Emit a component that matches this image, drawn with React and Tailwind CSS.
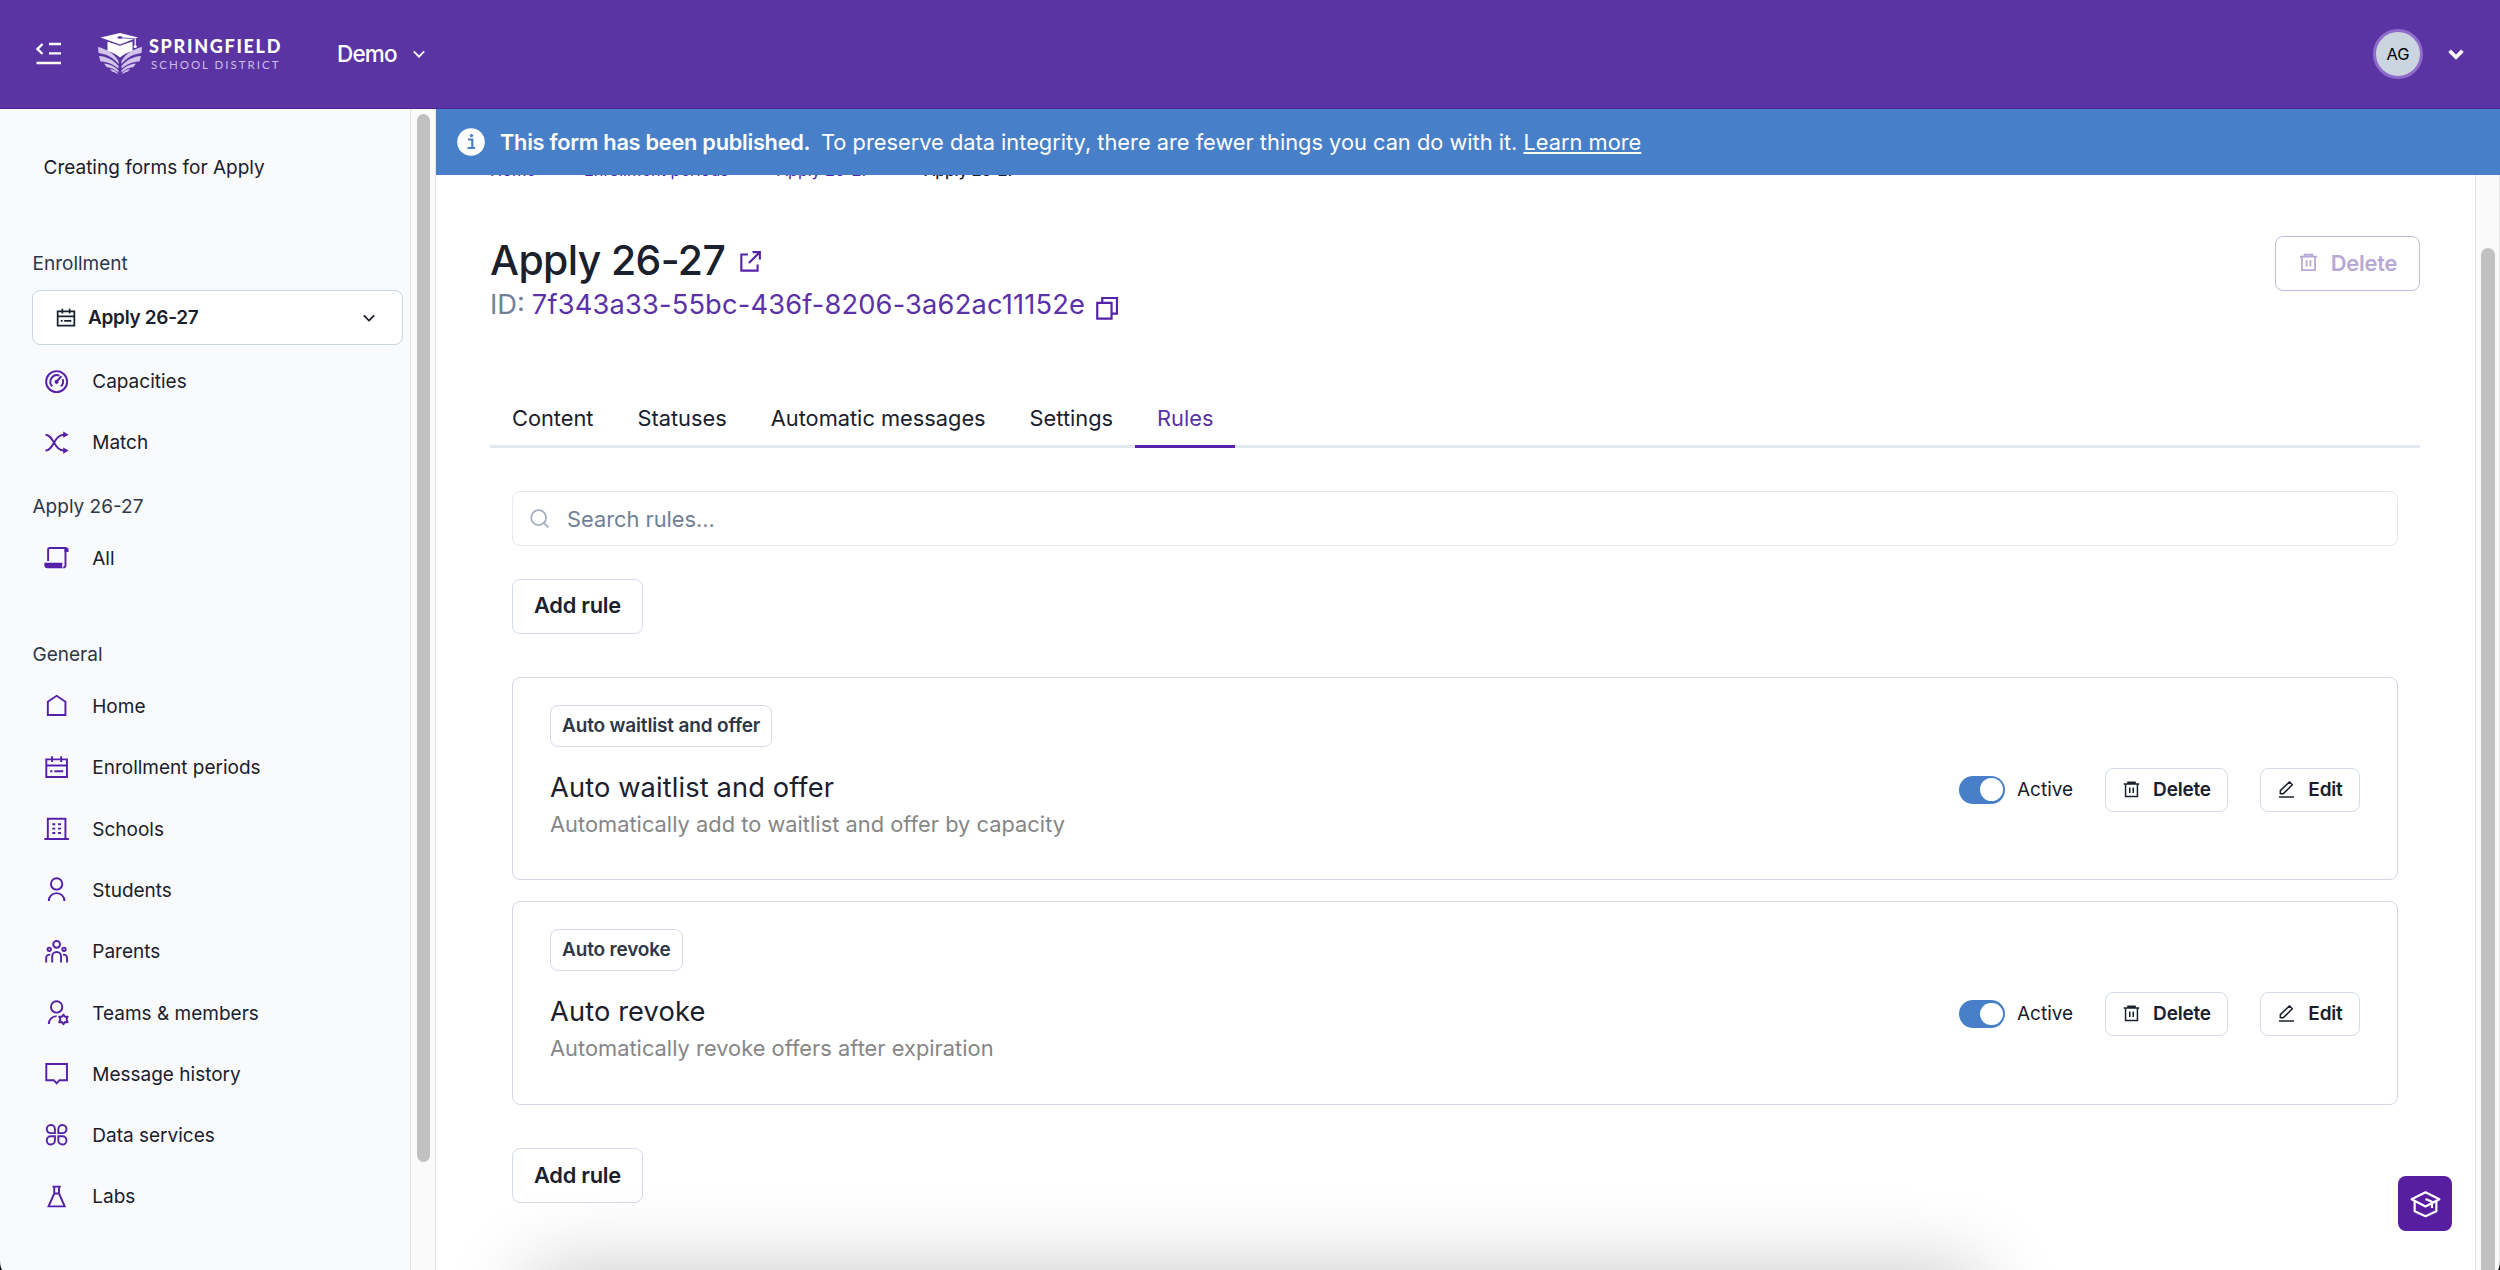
import clsx from 'clsx';

function Icon({ className, strokeWidth = 1.7, children }) {
    return (
        <svg
            viewBox="0 0 24 24"
            fill="none"
            stroke="currentColor"
            strokeWidth={strokeWidth}
            className={clsx('shrink-0', className)}
        >
            {children}
        </svg>
    );
}

const paths = {
    gauge: (
        <>
            <circle cx="12" cy="12" r="9.25" />
            <path d="M8.2 16.2A5.8 5.8 0 0 1 14.4 6.7M17.3 9.8a5.8 5.8 0 0 1-1.5 6.4" />
            <path d="m12.2 11.8 4-4.6" strokeWidth="1.8" />
            <circle cx="12" cy="12.2" r="1.8" fill="currentColor" stroke="none" />
        </>
    ),
    shuffle: (
        <>
            <path d="M2.2 5C9.5 5 9.5 19 18.5 19M2.2 19C9.5 19 9.5 5 18.5 5" />
            <path d="M17.8 2.2 22.6 5l-4.8 2.8zM17.8 16.2l4.8 2.8-4.8 2.8z" fill="currentColor" stroke="none" />
        </>
    ),
    scroll: (
        <>
            <path d="M4.5 15V4.75a1.3 1.3 0 0 1 1.3-1.3H19.8v15.2a1.9 1.9 0 0 1-1.9 1.9" />
            <path d="M19 3h1.8a1.7 1.7 0 0 1 1.7 1.7v2.4H19z" fill="currentColor" stroke="none" />
            <path d="M1.2 16.5h15.8v2.3a1.7 1.7 0 0 0 1.5 2.5H4a2.8 2.8 0 0 1-2.8-2.8z" fill="currentColor" stroke="none" />
        </>
    ),
    home: <path d="M4.25 8.6 12 3.35l7.75 5.25v11.65H4.25z" />,
    calendar: (
        <path d="M2.9 4.75h18.2v15.5H2.9zM2.9 10.2h18.2M8 2v5M16 2v5M6.3 15.2h2M10 15.2h7.8" />
    ),
    building: (
        <>
            <path d="M4.25 21V3.25h15.5V21M1.2 21.2h21.6" />
            <path d="M8.2 8.2h2.6M13.2 8.2h2.6M8.2 12h2.6M13.2 12h2.6M8.2 15.8h2.6M13.2 15.8h2.6" />
        </>
    ),
    user: (
        <>
            <circle cx="12" cy="7" r="5" />
            <path d="M5.1 22a6.9 6.9 0 0 1 13.8 0" />
        </>
    ),
    parents: (
        <>
            <circle cx="12" cy="5.6" r="3" />
            <circle cx="5.5" cy="10" r="1.5" />
            <circle cx="18.5" cy="10" r="1.5" />
            <path d="M8.1 21.5v-5.3a3.9 3.9 0 0 1 7.8 0v5.3M2.8 21.5v-4.2a2.7 2.7 0 0 1 3.6-2.5M21.2 21.5v-4.2a2.7 2.7 0 0 0-3.6-2.5" />
        </>
    ),
    team: (
        <>
            <circle cx="12" cy="7" r="5" />
            <path d="M5.1 22a6.9 6.9 0 0 1 6.9-6.9" />
            <path
                d="m18 13.8 1.3 1.9 2.4-.1-1 2.4 1 2.4-2.4-.1-1.3 1.9-1.3-1.9-2.4.1 1-2.4-1-2.4 2.4.1z"
                strokeLinejoin="round"
            />
        </>
    ),
    message: <path d="M2.9 3.6h18.2v14.2h-6.6L12 20.6l-2.5-2.8H2.9z" />,
    data: (
        <path d="M10.5 10.7V7A3.6 3.6 0 1 0 6.9 10.7zM13.5 10.7V7a3.6 3.6 0 1 1 3.6 3.7zM10.5 13.5v3.7a3.6 3.6 0 1 1-3.6-3.7zM13.5 13.5v3.7a3.6 3.6 0 1 0 3.6-3.7z" />
    ),
    flask: <path d="M8.3 3.2h7.4M9.9 3.2v6L4.9 20.6h14.2L14.1 9.2v-6M9.9 9.3h4.2" />,
    trash: (
        <path d="M2.2 5.2h19.6M7.5 4.5V3h9v1.5M4.5 5.2v15.6h15V5.2M9.8 9.5v7M14.2 9.5v7" />
    ),
    edit: (
        <path d="M2.5 21.6h19M4.2 17.4v-4L15.8 2.4l3.6 3.7-11.5 11.3z" strokeLinejoin="round" />
    ),
    external: <path d="M9.5 5.2H3.2v15.6h15.6v-6M14 3h7v7M20.8 3.2 10.5 13.5" />,
    copy: <path d="M3 7.2h13.2v14.6H3zM7.6 7V2.8h13.6v14.4H16.4" />,
    search: (
        <>
            <circle cx="11" cy="11" r="8.5" />
            <path d="m17.2 17.2 5 5" />
        </>
    ),
    chevron: <path d="m5 8.5 7 7 7-7" />,
    cap: (
        <>
            <path d="M1.3 8.7 12 3.3l10.7 5.4L12 14.3z" strokeLinejoin="round" />
            <path d="M3.6 10v8L12 21.8l8.400-3.800v-8M12 8.500l5 2.200v4.800" strokeLinejoin="round" />
        </>
    ),
};

const generalItems = [
    { label: 'Home', icon: 'home' },
    { label: 'Enrollment periods', icon: 'calendar' },
    { label: 'Schools', icon: 'building' },
    { label: 'Students', icon: 'user' },
    { label: 'Parents', icon: 'parents' },
    { label: 'Teams & members', icon: 'team' },
    { label: 'Message history', icon: 'message' },
    { label: 'Data services', icon: 'data' },
    { label: 'Labs', icon: 'flask' },
];

const rules = [
    { name: 'Auto waitlist and offer', description: 'Automatically add to waitlist and offer by capacity' },
    { name: 'Auto revoke', description: 'Automatically revoke offers after expiration' },
];

const tabs = ['Content', 'Statuses', 'Automatic messages', 'Settings', 'Rules'];

function Logo() {
    return (
        <div className="flex items-center gap-[7px]">
            <svg viewBox="0 0 44 42" className="h-[42px] w-[44px]">
                <g fill="#d3c4ec">
                    <path d="M0 14c8 2 16 6 20.500 14v3C15 24 8 21 .5 20zM44 14c-8 2-16 6-20.500 14v3C29 24 36 21 43.500 20z" />
                    <path d="M1 23c7 .5 14 3.500 19.500 10v2.500C15 31 8 28.500 2.500 28.500zM43 23c-7 .5-14 3.500-19.500 10v2.500C29 31 36 28.500 41.500 28.500z" />
                    <path d="M6 30.500c6 .5 11 3 14.500 7v2C17 36.500 13 34.500 8.500 34zM38 30.500c-6 .5-11 3-14.500 7v2C27 36.500 31 34.500 35.500 34z" />
                    <path d="M12 36c4 .5 7 2.500 8.500 5.500-2-1.500-4-2.500-6.500-3zM32 36c-4 .5-7 2.500-8.500 5.500 2-1.500 4-2.500 6.500-3z" />
                </g>
                <path d="M9.500 8.500v9.500c5 1.500 9.500 3.500 12.500 6.500 3-3 7.500-5 12.500-6.500V8.500L22 12z" fill="#fff" />
                <path d="M2.500 4.500 22 0l18 4.500L22 11.500z" fill="#fff" />
                <path d="M2.500 5.500 22 12.300l14-5.300" fill="none" stroke="#5b34a3" />
                <path d="M21 4.500 37.500 6v7" fill="none" stroke="#5b34a3" strokeWidth=".8" />
                <path d="M37.200 5.500v7" stroke="#fff" strokeWidth="1.2" />
                <circle cx="37.200" cy="13.500" r="1.6" fill="#fff" />
                <ellipse cx="22" cy="4.500" rx="2.6" ry="1.2" fill="#5b34a3" />
            </svg>
            <div className="-mt-[1px] flex w-[136px] flex-col font-['Lato',sans-serif] whitespace-nowrap">
                <span className="text-[18px] leading-[19px] font-black tracking-[1.7px] text-white">SPRINGFIELD</span>
                <span className="mt-[2px] pl-[2px] text-[11.5px] leading-[13px] tracking-[2px] text-[#cdbdea]">SCHOOL DISTRICT</span>
            </div>
        </div>
    );
}

function Header() {
    return (
        <header className="flex h-[109px] shrink-0 items-center border-b border-[#4c2496] bg-[#5b34a3] text-white">
            <svg viewBox="0 0 26 24" className="ml-[36px] h-[24px] w-[26px]" fill="none" stroke="currentColor" strokeWidth="2.4">
                <path d="M6.5 2 1.5 7l5 5M13 2h12M13 11.4h12M.5 21h24.5" />
            </svg>
            <div className="ml-[36px]">
                <Logo />
            </div>
            <span className="ml-[52px] w-[61px] text-[22.5px] font-medium tracking-[-0.8px]">Demo</span>
            <Icon className="ml-[12px] h-[18px] w-[18px]" strokeWidth={2.4}>{paths.chevron}</Icon>
            <div className="mr-[22px] ml-auto flex h-[50px] w-[50px] items-center justify-center rounded-full border-[3.5px] border-[#8f6bcb] bg-[#cbd5e0] text-[16.5px] text-black">
                AG
            </div>
            <Icon className="mr-[33px] h-[22px] w-[22px]" strokeWidth={4}>{paths.chevron}</Icon>
        </header>
    );
}

function NavItem({ icon, label }) {
    return (
        <a className="flex h-[61.3px] items-center pl-[43px] text-[19px] text-[#1a202c]">
            <Icon className="mb-[1px] h-[27.25px] w-[27.25px] text-[#5521a8]">{paths[icon]}</Icon>
            <span className="mt-[1px] ml-[22px]">{label}</span>
        </a>
    );
}

function Sidebar() {
    return (
        <aside className="flex w-[436px] shrink-0">
            <div className="flex w-[410px] flex-col bg-[#f9fafc] text-[#1a202c]">
                <p className="mt-[44px] pl-[43.5px] text-[19px] leading-[30px]">Creating forms for Apply</p>
                <p className="mt-[66px] pl-[32.5px] text-[19px] leading-[30px] text-[#2d3748]">Enrollment</p>
                <div className="mt-[11px] ml-[32px] flex h-[55px] w-[371px] shrink-0 items-center rounded-[8px] border border-[#cbd5e0] bg-white pr-[24px] pl-[22px] text-[19px] font-semibold tracking-[-0.3px]">
                    <Icon className="h-[22px] w-[22px]" strokeWidth={1.9}>{paths.calendar}</Icon>
                    <span className="mt-[1px] ml-[11px]">Apply 26-27</span>
                    <Icon className="ml-auto h-[18px] w-[18px]" strokeWidth={2.3}>{paths.chevron}</Icon>
                </div>
                <nav className="mt-[6px]">
                    <NavItem icon="gauge" label="Capacities" />
                    <NavItem icon="shuffle" label="Match" />
                </nav>
                <p className="mt-[18px] pl-[32.5px] text-[19px] leading-[30px] text-[#2d3748]">Apply 26-27</p>
                <nav className="mt-[6px]">
                    <NavItem icon="scroll" label="All" />
                </nav>
                <p className="mt-[51px] pl-[32.5px] text-[19px] leading-[30px] text-[#2d3748]">General</p>
                <nav className="mt-[6px]">
                    {generalItems.map((item) => (
                        <NavItem key={item.label} icon={item.icon} label={item.label} />
                    ))}
                </nav>
            </div>
            {/* Scrollbar */}
            <div className="w-[26px] border-x border-[#e4e4e4] bg-[#fafafa] pt-[5px] pl-[6px]">
                <div className="h-[1048px] w-[13px] rounded-full bg-[#c1c1c1]" />
            </div>
        </aside>
    );
}

function Button({ className, children }) {
    return (
        <button
            className={clsx(
                'flex items-center justify-center rounded-[8px] border font-semibold tracking-[-0.01em] whitespace-nowrap',
                className
            )}
        >
            {children}
        </button>
    );
}

function RuleCard({ rule }) {
    return (
        <div className="h-[203.3px] rounded-[8px] border border-[#d3dae5] px-[37px] pt-[26.7px]">
            <span className="inline-flex h-[42px] items-center rounded-[8px] border border-[#d3dce8] px-[11px] text-[19px] font-semibold tracking-[-0.16px] text-[#2d3748]">
                {rule.name}
            </span>
            <div className="mt-[21px] flex items-start">
                <div className="mt-[1.5px] flex-1">
                    <h3 className="text-[27.25px] leading-[38px] tracking-[0.12px] text-[#1a202c]">{rule.name}</h3>
                    <p className="text-[21.8px] leading-[35px] tracking-[0.03px] text-[#868686]">{rule.description}</p>
                </div>
                <div className="flex h-[44px] items-center text-[19px] text-[#1a202c]">
                    <div className="flex h-[28px] w-[46px] items-center justify-end rounded-full bg-[#4780c8] pr-[2.5px]">
                        <div className="h-[22.5px] w-[22.5px] rounded-full bg-white" />
                    </div>
                    <span className="ml-[12px] w-[56px]">Active</span>
                    <Button className="ml-[32px] h-[44px] w-[123px] gap-[12px] border-[#d3dce8]">
                        <Icon className="h-[19px] w-[19px]" strokeWidth={1.9}>{paths.trash}</Icon>
                        Delete
                    </Button>
                    <Button className="ml-[32px] h-[44px] w-[100px] gap-[12px] border-[#d3dce8]">
                        <Icon className="h-[19px] w-[19px]" strokeWidth={1.9}>{paths.edit}</Icon>
                        Edit
                    </Button>
                </div>
            </div>
        </div>
    );
}

function Main() {
    return (
        <main className="flex min-w-0 flex-1 flex-col">
            <div className="z-10 flex h-[66px] shrink-0 items-center bg-[#4780c8] pl-[21px] text-[21.8px] text-white">
                <svg viewBox="0 0 28 28" className="h-[28px] w-[28px]">
                    <circle cx="14" cy="14" r="13.8" fill="#fff" />
                    <path d="M11 11.5h4.3v8M10.5 20h7.5" fill="none" stroke="#4780c8" strokeWidth="2.2" />
                    <circle cx="14.5" cy="7.6" r="1.7" fill="#4780c8" />
                </svg>
                <span className="ml-[15px] w-[310px] font-semibold tracking-[-0.28px] whitespace-nowrap">This form has been published.</span>
                <span className="ml-[11px]">
                    To preserve data integrity, there are fewer things you can do with it.{' '}
                    <a className="underline decoration-2 underline-offset-2">Learn more</a>
                </span>
            </div>
            <div className="flex min-h-0 flex-1">
                <div className="flex min-w-0 flex-1 flex-col bg-white pr-[55px] pl-[54px]">
                    {/* Breadcrumbs, scrolled under the banner */}
                    <div className="-mt-[15px] flex h-[20px] shrink-0 text-[16.35px] leading-[20px] text-[#5521a8]">
                        <span className="w-[94px]">Home</span>
                        <span className="w-[193px]">Enrollment periods</span>
                        <span className="w-[147px] tracking-[-0.2px]">Apply 26-27</span>
                        <span className="font-medium tracking-[-0.4px] text-[#1a202c]">Apply 26-27</span>
                    </div>
                    <div className="mt-[55px] flex justify-between">
                        <div>
                            <h1 className="flex items-center text-[40.9px] leading-[51px] font-medium tracking-[-0.6px] text-[#1a202c]">
                                Apply 26-27
                                <Icon className="mt-[1px] ml-[13px] h-[25px] w-[25px] text-[#5521a8]" strokeWidth={2}>{paths.external}</Icon>
                            </h1>
                            <p className="flex items-center text-[27.25px] leading-[38px] text-[#718096]">
                                ID:
                                <span className="ml-[7px] tracking-[0.17px] text-[#5a31a8]">7f343a33-55bc-436f-8206-3a62ac11152e</span>
                                <Icon className="mt-[5px] ml-[9px] h-[26px] w-[26px] text-[#5521a8]" strokeWidth={2}>{paths.copy}</Icon>
                            </p>
                        </div>
                        <Button className="mt-[1px] h-[55px] w-[145px] gap-[12px] border-[#c6b9de] pb-[2px] text-[21.8px] text-[#b7a8d4]">
                            <Icon className="h-[21px] w-[21px]" strokeWidth={2}>{paths.trash}</Icon>
                            Delete
                        </Button>
                    </div>
                    <nav className="mt-[65px] flex h-[59px] shrink-0 border-b-[3px] border-[#e2e8f0] text-[21.8px] text-[#1a202c]">
                        {tabs.map((tab) => (
                            <a
                                key={tab}
                                className={clsx(
                                    'flex h-[59px] items-center border-b-[3px] px-[22px] pt-[2px]',
                                    tab === 'Rules' ? 'border-[#5521a8] text-[#5a31a8]' : 'border-transparent'
                                )}
                            >
                                {tab}
                            </a>
                        ))}
                    </nav>
                    <div className="px-[22px] pt-[43px]">
                        <div className="flex h-[55px] items-center rounded-[8px] border border-[#e2e8f0] pl-[16px] text-[21.8px] text-[#718096]">
                            <Icon className="h-[21px] w-[21px] text-[#a0aec0]" strokeWidth={2}>{paths.search}</Icon>
                            <span className="ml-[17px]">Search rules...</span>
                        </div>
                        <Button className="mt-[33px] h-[54.5px] w-[131px] border-[#d3dce8] pb-[2px] text-[21.8px] text-[#1a202c]">Add rule</Button>
                        <div className="mt-[43.5px] flex flex-col gap-[21px]">
                            {rules.map((rule) => (
                                <RuleCard key={rule.name} rule={rule} />
                            ))}
                        </div>
                        <Button className="mt-[43.5px] h-[54.5px] w-[131px] border-[#d3dce8] pb-[1px] text-[21.8px] text-[#1a202c]">Add rule</Button>
                    </div>
                </div>
                {/* Scrollbar */}
                <div className="w-[25px] border-x border-[#e4e4e4] bg-[#fafafa] pt-[73px] pl-[5px]">
                    <div className="h-[1040px] w-[14px] rounded-full bg-[#c1c1c1]" />
                </div>
            </div>
        </main>
    );
}

export default function App() {
    return (
        <div className="relative flex h-[1270px] w-[2500px] flex-col overflow-hidden bg-white font-['Inter',sans-serif] leading-[30px]">
            <Header />
            <div className="flex min-h-0 flex-1">
                <Sidebar />
                <Main />
            </div>
            {/* Shadow of the panel below the fold */}
            <div className="pointer-events-none absolute top-[1290px] left-[550px] h-[60px] w-[1410px] shadow-[0_0_80px_20px_rgba(0,0,0,0.22)]" />
            <button className="absolute top-[1176px] left-[2398px] flex h-[55px] w-[54px] items-center justify-center rounded-[8px] bg-[#571fa0] text-white">
                <Icon className="h-[31px] w-[31px]">{paths.cap}</Icon>
            </button>
            <svg viewBox="0 0 10 10" className="absolute bottom-0 left-0 h-[10px] w-[2px]" preserveAspectRatio="none">
                <path d="M0 0Q0 7 10 10H0z" />
            </svg>
            <svg viewBox="0 0 10 10" className="absolute right-0 bottom-0 h-[10px] w-[2px]" preserveAspectRatio="none">
                <path d="M10 0Q10 7 0 10H10z" />
            </svg>
        </div>
    );
}
